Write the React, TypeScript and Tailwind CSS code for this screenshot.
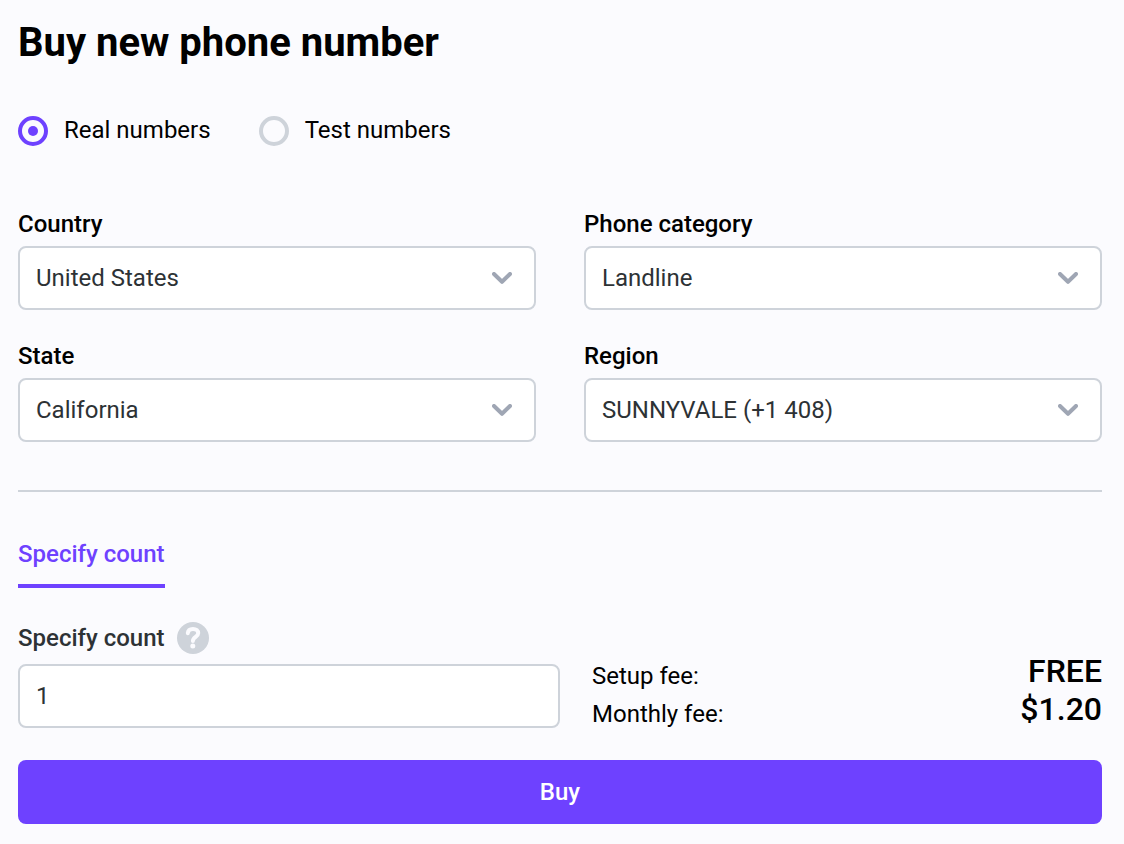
import { useState } from "react";
import type { ReactNode } from "react";

function Chevron() {
  return (
    <svg className="pointer-events-none col-start-1 row-start-1 mr-6 self-center justify-self-end" width="20" height="12" viewBox="0 0 20 12" fill="none" stroke="#9fa6b4" strokeWidth="4" aria-hidden="true">
      <path d="M2 2l8 7.8L18 2" strokeLinecap="round" strokeLinejoin="round" />
    </svg>
  );
}

function HelpIcon() {
  return (
    <svg className="size-8" viewBox="0 0 32 32" fill="none" aria-hidden="true">
      <circle cx="16" cy="16" r="16" fill="#ced3da" />
      <path d="M10.8 11.2C11 8.6 13 6.9 16 6.9c3.1 0 5.2 1.8 5.2 4.4 0 3.6-5.3 3.6-5.3 7.7" stroke="#fbfbfe" strokeWidth="4" strokeLinecap="round" strokeLinejoin="round" />
      <circle cx="15.8" cy="24.1" r="2.5" fill="#fbfbfe" />
    </svg>
  );
}

function SelectField({ id, label, options }: { id: string; label: string; options: string[] }) {
  return (
    <div className="flex flex-col gap-2">
      <label htmlFor={id} className="text-2xl leading-7 font-medium">{label}</label>
      <div className="grid">
        <select id={id} className="col-start-1 row-start-1 h-16 w-full appearance-none rounded-lg border-2 border-[#ced3da] bg-white px-4 text-2xl text-[#2d3235]">
          {options.map((o) => <option key={o}>{o}</option>)}
        </select>
        <Chevron />
      </div>
    </div>
  );
}

function Radio({ checked, onChange, children }: { checked: boolean; onChange: () => void; children: ReactNode }) {
  return (
    <label className="flex items-end gap-4 text-2xl leading-8">
      <input
        type="radio"
        name="kind"
        checked={checked}
        onChange={onChange}
        className="grid size-[30px] appearance-none place-items-center rounded-full border-4 border-[#ced3da] before:size-[10px] before:rounded-full checked:border-[#6e41ff] checked:before:bg-[#6e41ff]"
      />
      {children}
    </label>
  );
}

export default function App() {
  const [kind, setKind] = useState("real");
  return (
    <main className="min-h-screen bg-[#fbfbfe] pt-5 pr-[22px] pb-5 pl-[18px] font-['Roboto',sans-serif] text-black">
      <form onSubmit={(e) => e.preventDefault()}>
        <h1 className="text-[40px] leading-[46px] font-bold">Buy new phone number</h1>
        <div className="mt-12 flex gap-12">
          <Radio checked={kind === "real"} onChange={() => setKind("real")}>Real numbers</Radio>
          <Radio checked={kind === "test"} onChange={() => setKind("test")}>Test numbers</Radio>
        </div>
        <div className="mt-16 grid grid-cols-2 gap-x-12 gap-y-8">
          <SelectField id="country" label="Country" options={["United States"]} />
          <SelectField id="category" label="Phone category" options={["Landline"]} />
          <SelectField id="state" label="State" options={["California"]} />
          <SelectField id="region" label="Region" options={["SUNNYVALE (+1 408)"]} />
        </div>
        <hr className="mt-12 border-t-2 border-[#ced3da]" />
        <div role="tablist" className="mt-12 flex">
          <button type="button" role="tab" aria-selected="true" className="border-b-4 border-[#6e41ff] pb-4 text-2xl leading-7 font-medium text-[#6e41ff]">
            Specify count
          </button>
        </div>
        <div className="mt-8 grid grid-cols-2">
          <div className="flex flex-col gap-2">
            <div className="flex h-9 items-center gap-3">
              <label htmlFor="count" className="text-2xl leading-8 font-medium text-[#2d3235]">Specify count</label>
              <button type="button" aria-label="Help">
                <HelpIcon />
              </button>
            </div>
            <input id="count" type="text" defaultValue="1" className="h-16 w-full rounded-lg border-2 border-[#ced3da] bg-white px-4 text-2xl text-[#2d3235]" />
          </div>
          <dl className="flex flex-col justify-end pl-8 text-2xl leading-7">
            <div className="flex items-end justify-between">
              <dt>Setup fee:</dt>
              <dd className="text-[32px] leading-[38px] font-medium">FREE</dd>
            </div>
            <div className="flex items-end justify-between">
              <dt>Monthly fee:</dt>
              <dd className="text-[32px] leading-[38px] font-medium">$1.20</dd>
            </div>
          </dl>
        </div>
        <button type="submit" className="mt-8 h-16 w-full rounded-lg bg-[#6e41ff] text-2xl font-medium text-white">Buy</button>
      </form>
    </main>
  );
}
